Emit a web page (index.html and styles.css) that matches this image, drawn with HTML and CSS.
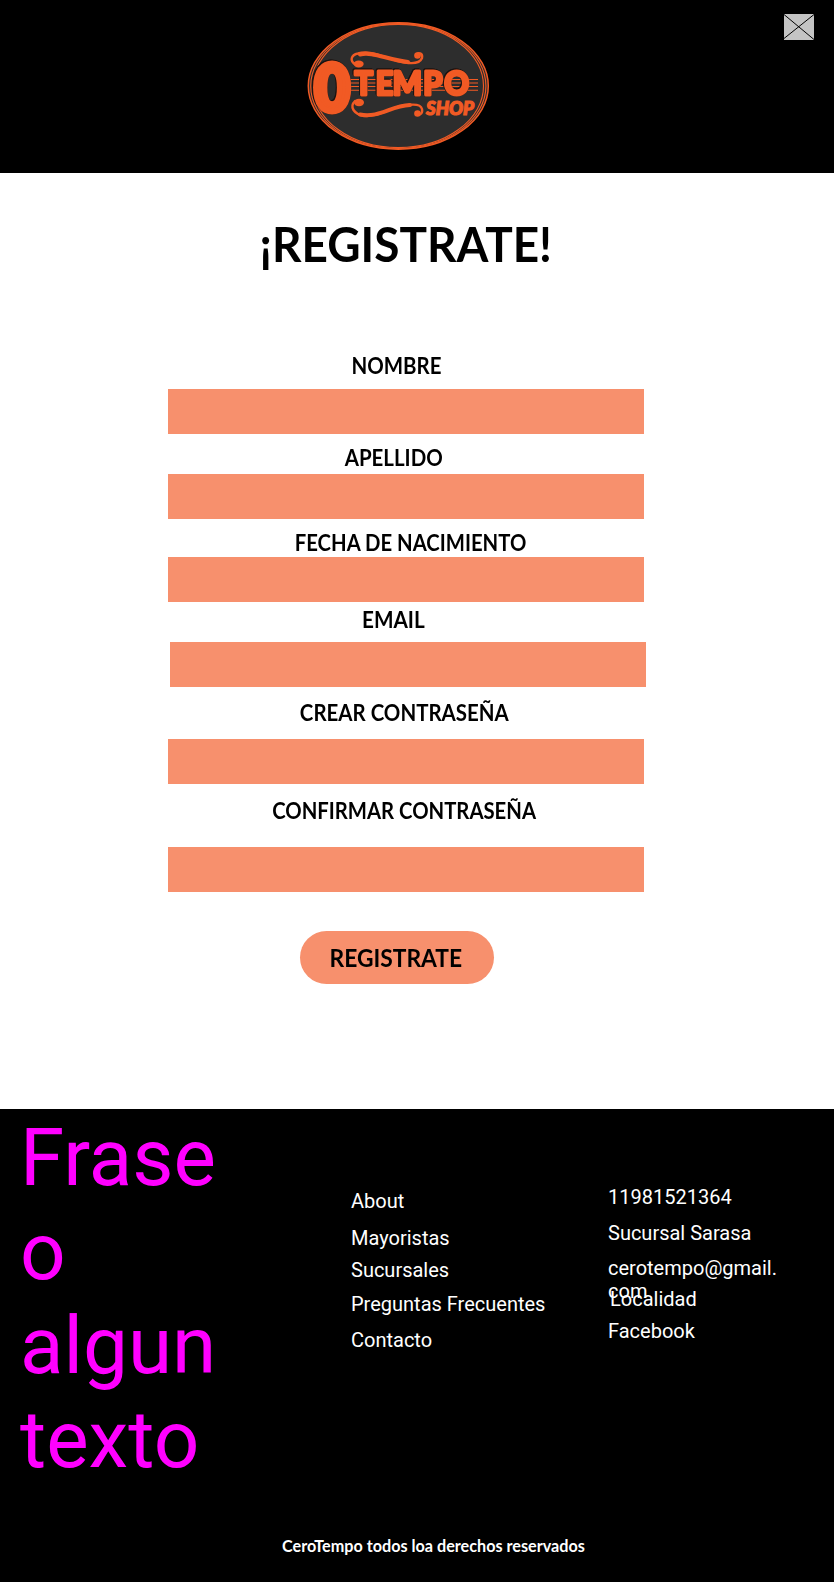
FILE: index.html
```html
<!DOCTYPE html>
<html lang="es">
<head>
<meta charset="utf-8">
<title>Registrate</title>
<link rel="stylesheet" href="styles.css">
</head>
<body>
<header class="header">
  <svg class="logo" viewBox="0 0 200 145" role="img" aria-label="0 Tempo Shop">
    <ellipse class="logo-plate" cx="98.3" cy="71" rx="90" ry="63.2"/>
    <ellipse class="logo-ring" cx="98.3" cy="71" rx="87.6" ry="62.4"/>
    <ellipse class="logo-ring" cx="98.3" cy="71" rx="85.2" ry="61.6"/>
    <path class="logo-line" d="M48 64.5H178M48 68H178M48 71.5H178M48 75.3H178"/>
    <g class="logo-swirl">
      <path d="M56 50C49 46 51 40 58 38.5C72 34 88 45 105 47.5C114 49 120 48 122 43C123 38 118 37 116 40"/>
      <path d="M55 86C49 92 54 99 64 101C82 102 90 91 108 90C116 89 121 90 122 94C123 99 119 101 116 99"/>
      <ellipse cx="58.7" cy="49" rx="5" ry="3.4"/>
      <circle cx="117.5" cy="40.5" r="3.3"/>
      <ellipse cx="59" cy="87.5" rx="5" ry="3.8"/>
      <circle cx="117.5" cy="98.5" r="3.3"/>
      <path class="logo-sweep" d="M60 39.5C72 36 88 45 108 47"/>
      <path class="logo-sweep" d="M60 99.5C80 103 90 91 110 90"/>
    </g>
    <text class="logo-zero" transform="translate(14.6 96.3) scale(.95 1)" font-size="64">0</text>
    <text class="logo-word" transform="scale(.93 1)" x="58.6 81.5 99.8 132.4 155" y="80.5" font-size="33">TEMPO</text>
    <text class="logo-shop" x="126" y="99.5" font-size="18" textLength="48" lengthAdjust="spacingAndGlyphs">SHOP</text>
  </svg>
  <svg class="close" viewBox="0 0 30 26" role="img" aria-label="Cerrar"><path d="M0 .5L30 25.5M0 24.5L30 .5"/></svg>
</header>
<main class="main">
  <h1 class="title"><span class="fit">¡REGISTRATE!</span></h1>
  <form class="form">
    <label class="field nombre"><span class="label"><span class="fit">NOMBRE</span></span><input class="input"></label>
    <label class="field apellido"><span class="label"><span class="fit">APELLIDO</span></span><input class="input"></label>
    <label class="field fecha"><span class="label"><span class="fit">FECHA DE NACIMIENTO</span></span><input class="input"></label>
    <label class="field email"><span class="label"><span class="fit">EMAIL</span></span><input class="input"></label>
    <label class="field crear"><span class="label"><span class="fit">CREAR CONTRASEÑA</span></span><input class="input"></label>
    <label class="field confirmar"><span class="label"><span class="fit">CONFIRMAR CONTRASEÑA</span></span><input class="input"></label>
    <button class="submit" type="button"><span class="fit">REGISTRATE</span></button>
  </form>
</main>
<footer class="footer">
  <div class="columns">
    <p class="phrase">Frase o algun texto</p>
    <ul class="links">
      <li class="h37">About</li><li class="h32">Mayoristas</li><li class="h34">Sucursales</li><li class="h36">Preguntas Frecuentes</li><li>Contacto</li>
    </ul>
    <ul class="contact">
      <li class="h36">11981521364</li><li class="h35">Sucursal Sarasa</li><li class="mail">cerotempo@gmail.<br>com</li><li class="place">Localidad</li><li>Facebook</li>
    </ul>
  </div>
  <p class="copyright">CeroTempo todos loa derechos reservados</p>
</footer>
</body>
</html>
```
FILE: styles.css
```css
* { box-sizing: border-box; }
body { margin: 0; width: 834px; background: #fff; color: #000; font-family: Roboto, sans-serif; }
p, h1, ul { margin: 0; padding: 0; }
ul { list-style: none; }

.header { position: relative; height: 173px; padding: 15px 0 0 300px; background: #000; }
.logo { display: block; width: 200px; height: 145px; }
.logo-plate { fill: #2d2d2d; stroke: #f15a24; stroke-width: 1.5; }
.logo-ring { fill: none; stroke: #f15a24; stroke-width: 1.1; }
.logo-line { fill: none; stroke: #f15a24; stroke-width: 1.1; }
.logo-swirl circle, .logo-swirl ellipse { fill: #f15a24; }
.logo-swirl path { fill: none; stroke: #f15a24; stroke-width: 2.4; stroke-linecap: round; }
.logo-swirl .logo-sweep { stroke-width: 4; }
.logo-zero, .logo-word, .logo-shop { fill: #f15a24; stroke: #f15a24; font-family: Lato, sans-serif; font-weight: 900; }
.logo-zero, .logo-word { stroke-linejoin: round; filter: drop-shadow(.7px .7px 0 #1a1210) drop-shadow(-.6px -.6px 0 #1a1210); }
.logo-zero { stroke-width: 6; }
.logo-word { stroke-width: 3; }
.logo-shop { font-style: italic; stroke-width: 1.2; }
.close { position: absolute; top: 14px; left: 784px; width: 30px; height: 26px; background: #c4c4c4; fill: none; stroke: #000; }

.fit { display: inline-block; transform: scaleX(var(--fit, .93)); }
.main { height: 936px; padding-top: 41px; }
.title { width: 811px; height: 60px; font: 700 48px/60px Lato, sans-serif; text-align: center; --fit: .957; }
.form { padding: 81px 0 0 168px; width: 646px; }
.field { display: block; }
.label { display: block; width: 476px; height: 20px; font: 700 22px/21px Lato, sans-serif; text-align: center; white-space: nowrap; }
.input { display: block; width: 476px; height: 45px; border: 0; padding: 0 12px; background: #f7906d; }
.nombre .label { padding-right: 19px; }
.nombre .input { margin-top: 14px; }
.apellido { padding-top: 13px; }
.apellido .label { padding-right: 25px; }
.apellido .input { margin-top: 7px; }
.fecha { padding-top: 13px; --fit: .922; }
.fecha .label { padding-left: 9px; }
.fecha .input { margin-top: 5px; }
.email { padding-top: 7px; --fit: .94; }
.email .label { padding-right: 25px; }
.email .input { margin: 13px 0 0 2px; }
.crear { padding-top: 15px; }
.crear .label { padding-right: 4px; }
.crear .input { margin-top: 17px; }
.confirmar { padding-top: 16px; --fit: .922; }
.confirmar .label { padding-right: 3px; }
.confirmar .input { margin-top: 27px; }
.submit { display: block; width: 194px; height: 53px; margin: 39px 0 0 132px; padding: 1px 2px 0 0; border: 0; border-radius: 27px; background: #f7906d; color: #000; font: 700 24px/52px Lato, sans-serif; --fit: .95; }

.footer { height: 473px; background: #000; color: #fff; }
.columns { display: flex; height: 422px; font-size: 20px; line-height: 23.4px; }
.phrase { width: 200px; margin: 2px 0 0 20px; color: #f0f; font-size: 80px; line-height: 94px; }
.links { width: 257px; margin: 81px 0 0 131px; }
.contact { width: 200px; margin-top: 77px; }
.h32 { height: 32px; }
.h34 { height: 34px; }
.h35 { height: 35px; }
.h36 { height: 36px; }
.h37 { height: 37px; }
.mail { height: 31px; }
.place { height: 32px; padding-left: 2px; }
.copyright { padding: 5px 0 0 282px; font: 700 16.2px/20px Lato, sans-serif; }
```
